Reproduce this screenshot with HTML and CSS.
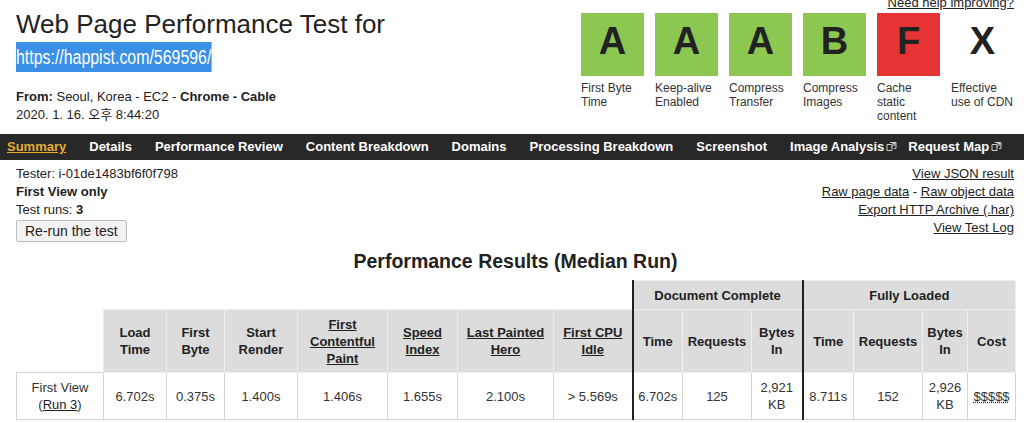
FILE: index.html
```html
<!DOCTYPE html>
<html lang="en">
<head>
    <meta charset="UTF-8">
    <meta name="viewport" content="width=device-width, initial-scale=1.0">
    <title>WebPageTest Test Result - happist.com</title>
    <link rel="stylesheet" href="styles.css">
</head>
<body>
    <div class="header">
        <div class="test-info">
            <h1 class="title">Web Page Performance Test for</h1>
            <div class="url"><a class="url-link" href="#">https://happist.com/569596/</a></div>
            <div class="location">
                <div><b>From:</b> Seoul, Korea - EC2 - <b>Chrome - Cable</b></div>
                <div>2020. 1. 16. 오후 8:44:20</div>
            </div>
        </div>
        <div class="grades">
            <a class="help" href="#">Need help improving?</a>
            <ul class="grade-list">
                <li class="grade"><div class="grade-box grade-a">A</div><span class="grade-label">First Byte Time</span></li>
                <li class="grade"><div class="grade-box grade-a">A</div><span class="grade-label">Keep-alive Enabled</span></li>
                <li class="grade"><div class="grade-box grade-a">A</div><span class="grade-label">Compress Transfer</span></li>
                <li class="grade"><div class="grade-box grade-b">B</div><span class="grade-label">Compress Images</span></li>
                <li class="grade"><div class="grade-box grade-f">F</div><span class="grade-label">Cache static content</span></li>
                <li class="grade"><div class="grade-box">X</div><span class="grade-label">Effective use of CDN</span></li>
            </ul>
        </div>
    </div>

    <ul class="nav">
        <li><a class="nav-link current" href="#">Summary</a></li>
        <li><a class="nav-link" href="#">Details</a></li>
        <li><a class="nav-link" href="#">Performance Review</a></li>
        <li><a class="nav-link" href="#">Content Breakdown</a></li>
        <li><a class="nav-link" href="#">Domains</a></li>
        <li><a class="nav-link" href="#">Processing Breakdown</a></li>
        <li><a class="nav-link" href="#">Screenshot</a></li>
        <li><a class="nav-link" href="#">Image Analysis<svg class="ext" width="11" height="11" viewBox="0 0 11 11"><path d="M1 3.5h5v6H1z M4 1.5h6v6H8 M5 6.5l4-4 M6.5 2.5H9v2.5" fill="none" stroke="#ccc" stroke-width="1"/></svg></a></li>
        <li><a class="nav-link" href="#">Request Map<svg class="ext" width="11" height="11" viewBox="0 0 11 11"><path d="M1 3.5h5v6H1z M4 1.5h6v6H8 M5 6.5l4-4 M6.5 2.5H9v2.5" fill="none" stroke="#ccc" stroke-width="1"/></svg></a></li>
    </ul>

    <div class="summary">
        <div class="run-info">
            <div>Tester: i-01de1483bf6f0f798</div>
            <div><b>First View only</b></div>
            <div>Test runs: <b>3</b></div>
            <button class="rerun">Re-run the test</button>
        </div>
        <div class="raw-links">
            <div><a href="#">View JSON result</a></div>
            <div><a href="#">Raw page data</a> - <a href="#">Raw object data</a></div>
            <div><a href="#">Export HTTP Archive (.har)</a></div>
            <div><a href="#">View Test Log</a></div>
        </div>
    </div>

    <div class="results-wrap">
        <h2 class="results-title">Performance Results (Median Run)</h2>
        <table class="results">
            <colgroup>
                <col class="w87"><col class="w63"><col class="w58"><col class="w73"><col class="w90">
                <col class="w70"><col class="w96"><col class="w79">
                <col class="w50"><col class="w69"><col class="w51">
                <col class="w51"><col class="w69"><col class="w45"><col class="w48">
            </colgroup>
            <tr class="group-row">
                <th class="blank" colspan="8"></th>
                <th class="group-start" colspan="3">Document Complete</th>
                <th class="group-start" colspan="4">Fully Loaded</th>
            </tr>
            <tr class="head-row">
                <th class="blank"></th>
                <th>Load Time</th>
                <th>First Byte</th>
                <th>Start Render</th>
                <th><a href="#">First Contentful Paint</a></th>
                <th><a href="#">Speed Index</a></th>
                <th><a href="#">Last Painted Hero</a></th>
                <th><a href="#">First CPU Idle</a></th>
                <th class="group-start">Time</th>
                <th>Requests</th>
                <th>Bytes In</th>
                <th class="group-start">Time</th>
                <th>Requests</th>
                <th>Bytes In</th>
                <th>Cost</th>
            </tr>
            <tr class="data-row">
                <td>First View<br>(<a href="#">Run 3</a>)</td>
                <td>6.702s</td>
                <td>0.375s</td>
                <td>1.400s</td>
                <td>1.406s</td>
                <td>1.655s</td>
                <td>2.100s</td>
                <td>&gt; 5.569s</td>
                <td class="group-start">6.702s</td>
                <td>125</td>
                <td>2,921 KB</td>
                <td class="group-start">8.711s</td>
                <td>152</td>
                <td>2,926 KB</td>
                <td><span class="cost">$$$$$</span></td>
            </tr>
        </table>
    </div>
</body>
</html>
```

FILE: styles.css
```css
body {
    margin: 0;
    font-family: "Liberation Sans", Arial, "Noto Sans CJK KR", sans-serif;
    font-size: 13px;
    color: #222;
    background: #fff;
}
a {
    color: #222;
}

/* header */
.header {
    display: flex;
    justify-content: space-between;
    padding: 0 10px 10px 16px;
}
.title {
    margin: 9px 0 0;
    font-size: 26px;
    font-weight: normal;
    line-height: 30px;
    color: #222;
}
.url {
    margin-top: 3px;
    height: 30px;
}
/* the url is set in a narrow face, squeeze the regular one */
.url-link {
    display: inline-block;
    line-height: 30px;
    font-size: 20px;
    background: #3a8fe6;
    color: #fff;
    text-decoration: none;
    transform: scaleX(0.795);
    transform-origin: left center;
}
.location {
    margin-top: 16px;
    line-height: 18px;
}

.grades {
    display: flex;
    flex-direction: column;
    align-items: flex-end;
    margin-top: -5px;
}
.help {
    line-height: 16px;
}
.grade-list {
    display: flex;
    gap: 11px;
    list-style: none;
    margin: 2px 0 0;
    padding: 0;
}
.grade {
    width: 63px;
}
.grade-box {
    height: 63px;
    line-height: 57px;
    text-align: center;
    font-size: 38px;
    font-weight: bold;
    color: #222;
}
.grade-a,
.grade-b {
    background: #8cc751;
}
.grade-f {
    background: #e63434;
}
.grade-label {
    display: block;
    margin-top: 5px;
    font-size: 12px;
    line-height: 14px;
    color: #333;
}

/* nav */
.nav {
    display: flex;
    gap: 23px;
    list-style: none;
    margin: 0;
    padding: 0 0 0 7px;
    height: 26px;
    line-height: 26px;
    background: #282828;
}
.nav-link {
    color: #fff;
    font-weight: bold;
    text-decoration: none;
}
.nav-link.current {
    color: #e6ac2e;
    text-decoration: underline;
}
.ext {
    margin: 0 -12px 0 2px;
    vertical-align: -1px;
}

/* run summary */
.summary {
    display: flex;
    justify-content: space-between;
    padding: 5px 10px 0 16px;
    line-height: 18px;
}
.raw-links {
    text-align: right;
}
.rerun {
    margin-top: 1px;
    height: 22px;
    padding: 0 8px;
    font-family: "Liberation Sans", Arial, sans-serif;
    font-size: 14px;
    color: #222;
    background: #f2f2f2;
    border: 1px solid #bdbdbd;
    border-radius: 2px;
}

/* results table */
.results-wrap {
    padding: 0 9px 0 16px;
}
.results-title {
    margin: 7px 0;
    text-align: center;
    font-size: 19.5px;
    line-height: 24px;
}
.results {
    width: 999px;
    border-collapse: collapse;
    table-layout: fixed;
    text-align: center;
    line-height: 17px;
}
.w87 { width: 87px; }
.w63 { width: 63px; }
.w58 { width: 58px; }
.w73 { width: 73px; }
.w90 { width: 90px; }
.w70 { width: 70px; }
.w96 { width: 96px; }
.w79 { width: 79px; }
.w50 { width: 50px; }
.w69 { width: 69px; }
.w51 { width: 51px; }
.w45 { width: 45px; }
.w48 { width: 48px; }

.results th {
    padding: 0 3px;
    background: #dcdcdc;
    border: 1px solid #eeeeee;
    color: #222;
}
.results th.blank {
    background: none;
    border: none;
}
.group-row th {
    height: 28px;
}
.head-row th {
    height: 62px;
}
.results td {
    height: 46px;
    padding: 0 3px;
    border: 1px solid #d6d6d6;
    color: #333;
}
.results .group-start {
    border-left: 2px solid #222;
}
.cost {
    text-decoration: underline dotted;
}
```
